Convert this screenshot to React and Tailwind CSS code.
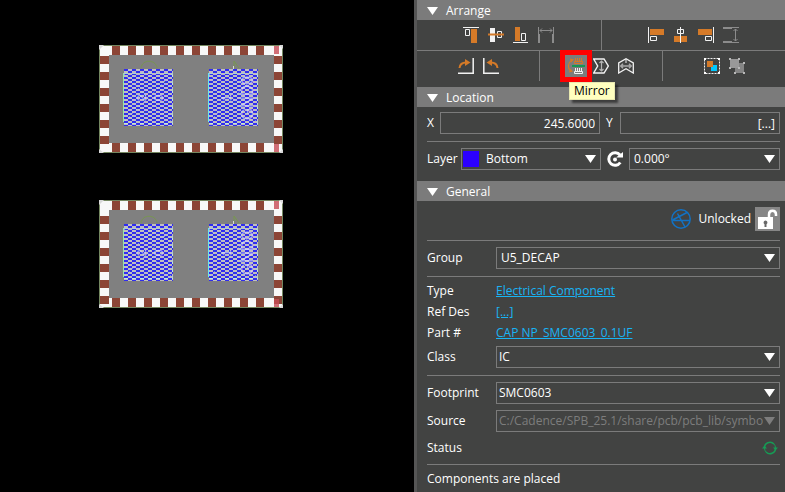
import { useState } from 'react'

const WHITE = '#f2f2f2'
const ORANGE = '#d57a28'
const GREY = '#8c8c8c'

function Icon({ children, size = 16, box = 16 }) {
  return (
    <svg width={size} height={size} viewBox={`0 0 ${box} ${box}`} fill="none" aria-hidden="true">
      {children}
    </svg>
  )
}

const alignVertical = [
  {
    label: 'Align top',
    art: (
      <>
        <path d="M0 .5h16" stroke={WHITE} />
        <path d="M8 2h6v14H8z" fill={ORANGE} />
        <path d="M2.500 2.500h4v6h-4z" stroke={WHITE} />
      </>
    )
  },
  {
    label: 'Align middle',
    art: (
      <>
        <path d="M2 1h5v14H2z" fill={WHITE} />
        <path d="M9.500 4.500h4v6h-4z" stroke={WHITE} />
        <path d="M0 7.500h16" stroke={ORANGE} strokeWidth="2" />
      </>
    )
  },
  {
    label: 'Align bottom',
    art: (
      <>
        <path d="M2 0h5v14H2z" fill={ORANGE} />
        <path d="M8.500 6.500h4v7h-4z" stroke={WHITE} />
        <path d="M0 15.500h15" stroke={WHITE} />
      </>
    )
  },
  {
    label: 'Distribute horizontally',
    art: (
      <>
        <path d="M.5 0v8M15.500 0v8" stroke={GREY} />
        <path d="M0 7h2v9H0zM14 7h2v9h-2z" fill={GREY} />
        <path d="M2 3.500h12M4 1.500l-2 2 2 2M12 1.500l2 2-2 2" stroke={GREY} />
      </>
    )
  }
]

const alignHorizontal = [
  {
    label: 'Align left',
    art: (
      <>
        <path d="M.5 0v16" stroke={WHITE} />
        <path d="M2 2h14v6H2z" fill={ORANGE} />
        <path d="M2.500 9.500h6v4h-6z" stroke={WHITE} />
      </>
    )
  },
  {
    label: 'Align centre',
    art: (
      <>
        <path d="M1 9h13v6H1z" fill={ORANGE} />
        <path d="M4.500 2.500h6v4h-6zM7.500 0v16" stroke={WHITE} />
      </>
    )
  },
  {
    label: 'Align right',
    art: (
      <>
        <path d="M0 2h14v6H0z" fill={ORANGE} />
        <path d="M7.500 9.500h6v4h-6z" stroke={WHITE} />
        <path d="M15.500 0v16" stroke={WHITE} />
      </>
    )
  },
  {
    label: 'Distribute vertically',
    art: (
      <>
        <path d="M8 .5h8M8 15.500h8" stroke={GREY} />
        <path d="M0 0h9v2H0zM0 14h9v2H0z" fill={GREY} />
        <path d="M12.500 2v12M10.500 4l2-2 2 2M10.500 12l2 2 2-2" stroke={GREY} />
      </>
    )
  }
]

const rotateTools = [
  {
    label: 'Rotate clockwise',
    art: (
      <>
        <path d="M0 15.200h16M15.200 0v16" stroke={WHITE} strokeWidth="1.500" />
        <path d="M1.500 10C2 6 4 4.500 8 4.500" stroke={ORANGE} strokeWidth="2" />
        <path d="M7 1l5.500 3.500L7 8z" fill={ORANGE} />
      </>
    )
  },
  {
    label: 'Rotate counterclockwise',
    art: (
      <>
        <path d="M0 15.200h16M.8 0v16" stroke={WHITE} strokeWidth="1.500" />
        <path d="M14.500 10C14 6 12 4.500 8 4.500" stroke={ORANGE} strokeWidth="2" />
        <path d="M9 1L3.500 4.500 9 8z" fill={ORANGE} />
      </>
    )
  }
]

const flipTools = [
  {
    label: 'Flip horizontally',
    art: (
      <>
        <path d="M.7 1h10.300l4.300 7-4.300 7H.7l4-7z" stroke={WHITE} strokeWidth="1.400" />
        <path d="M8.500 3v10M6.500 5l2-2 2 2M6.500 11l2 2 2-2" stroke="#b4b4b4" strokeWidth="1.200" />
      </>
    )
  },
  {
    label: 'Flip vertically',
    art: (
      <>
        <path d="M.7 15V5L8 .8 15.300 5v10L8 10.800z" stroke={WHITE} strokeWidth="1.300" />
        <path d="M8 1v4" stroke={WHITE} />
        <path d="M3 8h10M5 5.800L2.800 8 5 10.200M11 5.800L13.200 8 11 10.200" stroke="#a8a8a8" strokeWidth="1.500" />
      </>
    )
  }
]

const groupTools = [
  {
    label: 'Group',
    art: (
      <>
        <path d="M.5 .5h15v15H.5z" stroke={WHITE} strokeDasharray="2 1" />
        <path d="M3 3h6v6H3z" fill={ORANGE} />
        <path d="M9 7h4v6H7V9h2z" fill="#00c8ff" />
        <path d="M0 0h2v2H0zM14 0h2v2h-2zM0 14h2v2H0zM14 14h2v2h-2z" fill="#fff" />
      </>
    )
  },
  {
    label: 'Ungroup',
    art: (
      <>
        <path d="M6 5h9v10H6z" fill="#858585" />
        <path d="M1 1h9v9H1z" fill="#999" />
        <path
          d="M0 0h2v2H0zM9 0h2v2H9zM0 9h2v2H0zM9 9h2v2H9zM14 4h2v2h-2zM5 14h2v2H5zM14 14h2v2h-2z"
          fill="#b8b8b8"
        />
      </>
    )
  }
]

function ToolGroup({ tools, children, className = '' }) {
  return (
    <div className={`flex h-[30px] flex-1 items-center justify-center gap-[9px] ${className}`}>
      {children}
      {tools.map(tool => (
        <button key={tool.label} type="button" aria-label={tool.label} className="block">
          <Icon>{tool.art}</Icon>
        </button>
      ))}
    </div>
  )
}

function MirrorButton() {
  return (
    <div className="relative -mx-[3px]">
      <button
        type="button"
        aria-label="Mirror"
        className="flex size-[22px] items-center justify-center bg-[#7c7c7c] ring-5 ring-[#ff0000]"
      >
        <Icon size={18} box={18}>
          <path d="M4.500 3.500C.5 6 .5 11 3.500 13.500" stroke={ORANGE} strokeWidth="1.200" />
          <path d="M3 1.500l4 1-3 3zM2 15.500l4-1-3-3z" fill={ORANGE} />
          <path d="M7.500 4.500h8v2h-8zM8.500 1v3M10.500 1v3M12.500 1v3M14.500 1v3" stroke={ORANGE} />
          <path d="M5 8h13v2H5z" fill="#159653" />
          <path d="M7.500 14.500h8v2h-8zM8.500 11v3M10.500 11v3M12.500 11v3M14.500 11v3" stroke={WHITE} />
        </Icon>
      </button>
      <div
        role="tooltip"
        className="absolute top-[27px] left-1 z-10 border border-[#e8e8b0] bg-[#ffffbf] px-1 text-[12px] leading-4 text-black shadow-[3px_3px_2px_rgba(0,0,0,0.5)]"
      >
        Mirror
      </div>
    </div>
  )
}

function Section({ title, children }) {
  return (
    <section>
      <h2>
        <button
          type="button"
          aria-expanded="true"
          className="flex h-5 w-full items-center gap-2 bg-[#7b7b7b] px-[10px] pt-[2px] text-left"
        >
          <svg width="11" height="8" viewBox="0 0 11 8" aria-hidden="true">
            <path d="M0 0h11L5.500 8z" fill="#fff" />
          </svg>
          {title}
        </button>
      </h2>
      {children}
    </section>
  )
}

function Select({ id, label, value, disabled, swatch, pad = 'pl-[2px]', grow = 'flex-1' }) {
  return (
    <div className={`relative min-w-0 ${grow}`}>
      {swatch && <span className="absolute top-[3px] left-[2px] size-4 bg-[#2b00ff]" />}
      <select
        id={id}
        aria-label={label}
        disabled={disabled}
        className={`block h-[22px] w-full appearance-none border border-[#7b7b7b] bg-[#424342] pr-4 ${pad} disabled:text-[#7d7d7d] disabled:opacity-100`}
      >
        <option>{value}</option>
      </select>
      <svg width="11" height="8" viewBox="0 0 11 8" className="pointer-events-none absolute top-[7px] right-[5px]" aria-hidden="true">
        <path d="M0 0h11L5.500 8z" fill={disabled ? '#7d7d7d' : '#fff'} />
      </svg>
    </div>
  )
}

function SelectRow({ id, label, ...rest }) {
  return (
    <div className="flex items-center">
      <label htmlFor={id} className="w-[69px]">{label}</label>
      <Select id={id} {...rest} />
    </div>
  )
}

function LinkRow({ label, children }) {
  return (
    <div className="flex h-[21px] items-center">
      <span className="w-[69px]">{label}</span>
      <a href="#" className="text-[#18b4f5] underline">{children}</a>
    </div>
  )
}

const Divider = () => <hr className="border-[#7b7b7b]" />

// Hatched copper pad with its outline and diagonal guides
function Pad({ x, edge }) {
  return (
    <g transform={`translate(${x} 24)`}>
      <rect width="49" height="57" fill="url(#hatch)" />
      <path d="M0 5L48 53M48 5L0 53" stroke="#c4f0e4" strokeDasharray="1 4" opacity=".7" />
      <path d="M0 4.500h49M0 54.500h49M48.500 4v50" stroke="#c8f4dc" strokeDasharray="4 4" opacity=".8" />
      <path d="M-.5 4v49" stroke={edge} />
    </g>
  )
}

function Capacitor({ offset, className }) {
  const across = Array.from({ length: 10 }, (_, i) => 13 + i * 16)
  const down = Array.from({ length: 6 }, (_, i) => offset + i * 16)
  return (
    <svg width="184" height="108" viewBox="0 0 184 108" className={`absolute ${className}`} role="img" aria-label="Capacitor footprint">
      <defs>
        <pattern id="hatch" width="8" height="4" patternUnits="userSpaceOnUse">
          <path d="M0 0h8v4H0z" fill="#c0c0c0" />
          <path d="M0 0h4v2H0zM4 2h4v2H4z" fill="#302cf0" />
        </pattern>
      </defs>
      <rect x="1" width="183" height="108" fill="#f8f8f8" />
      {across.map(x => (
        <g key={x} fill="#8c4536">
          <rect x={x} y="1" width="8" height="9" />
          <rect x={x} y="98" width="8" height="9" />
        </g>
      ))}
      {down.map(y => (
        <g key={y} fill="#8c4536">
          <rect x="1" y={y} width="9" height="8" />
          <rect x="175" y={y} width="9" height="8" />
        </g>
      ))}
      <path d="M175 1h5v8h-5zM175 99h5v8h-5z" fill="#c54b55" opacity=".8" />
      <path d="M.5 .5h183v107H.5z" stroke="#748760" fill="none" />
      <path d="M0 0h5L0 5zM184 0h-4l4 4zM0 108h5l-5-4zM184 108h-4l4-4z" fill="#d8d8d8" />
      <rect x="10" y="10" width="165" height="88" fill="#808080" />
      <path d="M42 23c1-9 15-9 16 0M135 24v-8l5 7" stroke="#789750" fill="none" />
      <path d="M134.500 21v6" stroke="#d8d8d8" />
      <Pad x={25} edge="#98e4a8" />
      <Pad x={110} edge="#68e4f4" />
      <g fill="#dcdcff" fillOpacity=".65" fontFamily="Liberation Sans" textAnchor="middle">
        <text transform="translate(47 53) rotate(-90)" fontSize="13">2</text>
        <text transform="translate(64 53) rotate(-90)" fontSize="13">0</text>
        <text transform="translate(132 53) rotate(-90)" fontSize="13">1</text>
        <text transform="translate(154 53) rotate(-90)" fontSize="16">GND0</text>
      </g>
    </svg>
  )
}

export default function App() {
  const [x, setX] = useState('245.6000')
  const [y, setY] = useState('[...]')

  return (
    <div className="grid min-h-screen grid-cols-[414fr_371fr] bg-black font-['Open_Sans','Noto_Sans',sans-serif] text-[12px] leading-4 text-white">
      <main className="relative overflow-hidden">
        <Capacitor offset={11} className="top-[45px] left-[99px]" />
        <Capacitor offset={16} className="top-[200px] left-[99px]" />
      </main>

      <aside className="min-w-0 border-l-3 border-[#555] bg-[#424342]">
        <Section title="Arrange">
          <div className="flex border-b border-[#7b7b7b]">
            <ToolGroup tools={alignVertical} className="border-r border-[#7b7b7b]" />
            <ToolGroup tools={alignHorizontal} />
          </div>
          <div className="flex pb-[6px]">
            <ToolGroup tools={rotateTools} />
            <ToolGroup tools={flipTools} className="border-x border-[#7b7b7b]">
              <MirrorButton />
            </ToolGroup>
            <ToolGroup tools={groupTools} />
          </div>
        </Section>

        <Section title="Location">
          <div className="pt-[5px] pr-[5px] pb-[11px] pl-[10px]">
            <div className="flex items-center pb-[7px]">
              <label htmlFor="pos-x" className="w-[13px]">X</label>
              <input
                id="pos-x"
                value={x}
                onChange={e => setX(e.target.value)}
                className="h-[22px] min-w-0 flex-1 border border-[#7b7b7b] px-1 text-right"
              />
              <label htmlFor="pos-y" className="w-5 pl-[6px]">Y</label>
              <input
                id="pos-y"
                value={y}
                onChange={e => setY(e.target.value)}
                className="h-[22px] min-w-0 flex-1 border border-[#7b7b7b] px-1 text-right"
              />
            </div>
            <Divider />
            <div className="flex items-center pt-[6px]">
              <label htmlFor="layer" className="w-[34px]">Layer</label>
              <Select id="layer" value="Bottom" swatch pad="pl-6" grow="flex-[140]" />
              <span className="px-[6px]">
                <Icon>
                  <path d="M13.300 11.500A6.300 6.300 0 1 1 13 4" stroke="#fff" strokeWidth="3" />
                  <path d="M9 6.500h7V1z" fill="#fff" />
                  <circle cx="8" cy="8.500" r="2" fill="#fff" />
                </Icon>
              </span>
              <Select id="rotation" label="Rotation" value="0.000°" pad="pl-1" grow="flex-[151]" />
            </div>
          </div>
        </Section>

        <Section title="General">
          <div className="flex flex-col pt-[6px] pr-[5px] pb-1 pl-[10px]">
            <div className="flex items-center justify-end pb-[9px]">
              <svg width="20" height="20" viewBox="0 0 20 20" fill="none" stroke="#1272c4" strokeWidth="1.500" className="mr-2" aria-hidden="true">
                <circle cx="10" cy="10" r="9.200" />
                <path d="M1.500 11L16 3.500M6.500 4.500L14 18M1.500 11.500h17.500" />
              </svg>
              <span className="mr-1">Unlocked</span>
              <button type="button" aria-label="Unlocked" className="flex h-6 w-[25px] items-center justify-center bg-[#868686]">
                <Icon size={21} box={21}>
                  <path d="M12 10V5.500c0-5 7-5 7 0V7" stroke="#fff" strokeWidth="2.500" />
                  <path d="M1 8h15v12H1z" fill="#fff" />
                  <path d="M8.500 11.500a2 2 0 0 1 1 3.700V18h-2v-2.800a2 2 0 0 1 1-3.700z" fill="#686868" />
                </Icon>
              </button>
            </div>
            <Divider />
            <div className="pt-[6px] pb-[7px]">
              <SelectRow id="group" label="Group" value="U5_DECAP" pad="pl-1" />
            </div>
            <Divider />
            <div className="pt-[3px]">
              <LinkRow label="Type">Electrical Component</LinkRow>
              <LinkRow label="Ref Des">[...]</LinkRow>
              <LinkRow label="Part #">CAP NP_SMC0603_0.1UF</LinkRow>
            </div>
            <div className="pt-[3px] pb-[7px]">
              <SelectRow id="class" label="Class" value="IC" />
            </div>
            <Divider />
            <div className="flex flex-col gap-[6px] py-[6px]">
              <SelectRow id="footprint" label="Footprint" value="SMC0603" />
              <SelectRow id="source" label="Source" value="C:/Cadence/SPB_25.1/share/pcb/pcb_lib/symbo" disabled />
              <div className="flex h-5 items-center justify-between pr-[2px]">
                <span>Status</span>
                <button type="button" aria-label="Refresh status">
                  <Icon>
                    <path d="M2.500 8A5.500 5.500 0 0 1 12 4M13.500 8A5.500 5.500 0 0 1 4 12" stroke="#169b55" strokeWidth="1.500" />
                    <path d="M12 4a5.500 5.500 0 0 1 1.500 4M4 12a5.500 5.500 0 0 1-1.500-4" stroke="#169b55" />
                    <path d="M0 8.500L2.500 5.500 5 8.500zM11 7.500L13.500 10.500 16 7.500z" fill="#169b55" />
                  </Icon>
                </button>
              </div>
            </div>
            <Divider />
            <p className="pt-[6px]">Components are placed</p>
          </div>
        </Section>
      </aside>
    </div>
  )
}
